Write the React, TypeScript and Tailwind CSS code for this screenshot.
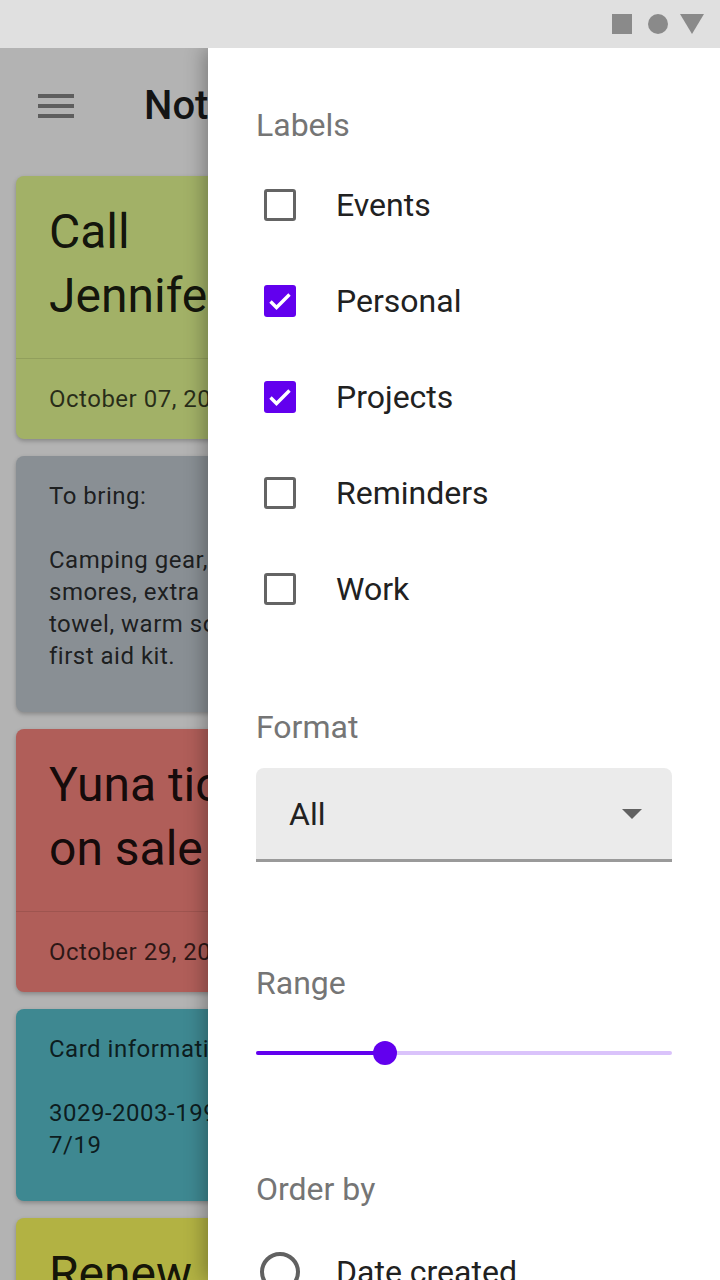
import { ReactNode } from "react";

type Note = {
  color: string;
  title?: string[];
  body?: string[];
  date?: string;
};

const notes: Note[] = [
  { color: "bg-[#a2b167]", title: ["Call", "Jennifer"], date: "October 07, 2019" },
  {
    color: "bg-[#898f94]",
    body: ["To bring:", "", "Camping gear,", "smores, extra", "towel, warm socks,", "first aid kit."],
  },
  { color: "bg-[#b05e59]", title: ["Yuna tickets", "on sale"], date: "October 29, 2019" },
  { color: "bg-[#3e8891]", body: ["Card information", "", "3029-2003-1999", "7/19"] },
  { color: "bg-[#b2b243]", title: ["Renew", "passport"] },
];

const labels = [
  { name: "Events", checked: false },
  { name: "Personal", checked: true },
  { name: "Projects", checked: true },
  { name: "Reminders", checked: false },
  { name: "Work", checked: false },
];

function NoteCard({ note }: { note: Note }) {
  return (
    <div className={`${note.color} shrink-0 overflow-hidden rounded-lg shadow-[0_2px_4px_rgba(0,0,0,0.25)]`}>
      {note.title && (
        <div className="whitespace-nowrap px-[33px] pb-[30px] pt-6 text-[48px] leading-[64px] text-black/90">
          {note.title.map((t) => (
            <div key={t}>{t}</div>
          ))}
        </div>
      )}
      {note.date && (
        <div className="whitespace-nowrap border-t border-black/10 px-[33px] py-6 text-[24px] leading-8 tracking-[0.5px] text-black/75">
          {note.date}
        </div>
      )}
      {note.body && (
        <div className="whitespace-nowrap px-[33px] pb-10 pt-6 text-[24px] leading-8 tracking-[0.5px] text-black/80">
          {note.body.map((line, i) => (
            <div key={i} className="h-8">
              {line}
            </div>
          ))}
        </div>
      )}
    </div>
  );
}

function Checkbox({ checked }: { checked: boolean }) {
  if (checked) {
    return (
      <div className="flex h-8 w-8 items-center justify-center rounded-[3px] bg-[#6200ee]">
        <svg viewBox="0 0 32 32" className="h-8 w-8">
          <polyline points="6.5,16.5 12.5,22.5 25.5,9.5" fill="none" stroke="#ffffff" strokeWidth="3.4" />
        </svg>
      </div>
    );
  }
  return <div className="h-8 w-8 rounded-[3px] border-[3px] border-[#646464]" />;
}

function SectionTitle({ children, className = "" }: { children: ReactNode; className?: string }) {
  return <h3 className={`shrink-0 text-[32px] leading-10 text-[#757575] ${className}`}>{children}</h3>;
}

export default function App() {
  const value = 0.31;
  return (
    <div className="relative h-[1280px] w-[720px] overflow-hidden bg-[#b3b3b3] font-['Roboto',sans-serif]">
      {/* status bar */}
      <div className="relative z-20 flex h-12 items-center justify-end bg-[#e0e0e0] pr-4">
        <div className="h-5 w-5 bg-[#8a8a8a]" />
        <div className="ml-4 h-5 w-5 rounded-full bg-[#8a8a8a]" />
        <svg viewBox="0 0 24 20" className="ml-3 h-5 w-6">
          <polygon points="0,0 24,0 12,20" fill="#8a8a8a" />
        </svg>
      </div>

      {/* app behind the scrim */}
      <div className="flex h-[112px] items-center pl-8 pt-1">
        <svg viewBox="0 0 24 24" className="h-12 w-12">
          <path d="M3 18h18v-2H3v2zm0-5h18v-2H3v2zm0-7v2h18V6H3z" fill="#5e5e5e" />
        </svg>
        <h1 className="ml-16 text-[40px] font-medium text-[#141414]">Notes</h1>
      </div>
      <div className="flex w-[336px] flex-col gap-[17px] pl-4 pt-4 box-content">
        {notes.map((n, i) => (
          <NoteCard key={i} note={n} />
        ))}
      </div>

      {/* filter sheet */}
      <div className="absolute bottom-0 right-0 top-12 z-10 flex w-[512px] flex-col bg-white pl-12 pr-12 pt-[57px] shadow-[-4px_0_18px_rgba(0,0,0,0.3)]">
        <SectionTitle>Labels</SectionTitle>
        <div className="mt-3 flex shrink-0 flex-col">
          {labels.map((l) => (
            <label key={l.name} className="flex h-24 items-center">
              <span className="flex w-12 justify-center">
                <Checkbox checked={l.checked} />
              </span>
              <span className="ml-8 text-[32px] text-[#212121]">{l.name}</span>
            </label>
          ))}
        </div>

        <SectionTitle className="mt-[70px]">Format</SectionTitle>
        <div className="mt-[21px] flex h-[94px] shrink-0 items-center justify-between rounded-t-lg border-b-[3px] border-[#9a9a9a] bg-[#ebebeb] pl-[33px] pr-[30px]">
          <span className="text-[32px] text-[#212121]">All</span>
          <svg viewBox="0 0 20 10" className="h-[10px] w-5">
            <polygon points="0,0 20,0 10,10" fill="#616161" />
          </svg>
        </div>

        <SectionTitle className="mt-[101px]">Range</SectionTitle>
        <div className="relative mt-[26px] flex h-12 shrink-0 items-center">
          <div className="flex h-1 w-full rounded-full bg-[#dac3fb]">
            <div className="h-1 rounded-full bg-[#6200ee]" style={{ width: `${value * 100}%` }} />
          </div>
          <div
            className="absolute top-1/2 h-6 w-6 -translate-x-1/2 -translate-y-1/2 rounded-full bg-[#6200ee]"
            style={{ left: `${value * 100}%` }}
          />
        </div>

        <SectionTitle className="mt-[92px]">Order by</SectionTitle>
        <div className="mt-[15px] flex h-24 shrink-0 items-center">
          <span className="flex w-12 justify-center">
            <span className="h-10 w-10 rounded-full border-4 border-[#616161]" />
          </span>
          <span className="ml-8 text-[32px] text-[#212121]">Date created</span>
        </div>
      </div>
    </div>
  );
}
